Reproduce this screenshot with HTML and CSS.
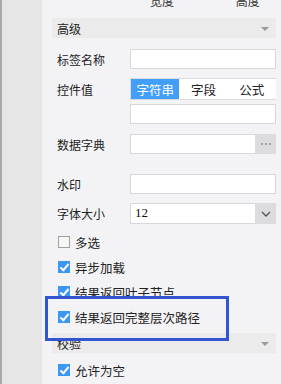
FILE: index.html
```html
<!DOCTYPE html>
<html lang="zh-CN">
<head>
    <meta charset="UTF-8">
    <title>控件属性</title>
    <link rel="stylesheet" href="styles.css">
</head>
<body>
    <div class="app">
        <div class="rail"></div>
        <div class="panel">
            <div class="size-head">
                <span class="w">宽度</span>
                <span class="h">高度</span>
            </div>

            <!-- 高级 -->
            <div class="group-bar">
                <span>高级</span>
                <i class="tri"></i>
            </div>

            <div class="row r-name">
                <label>标签名称</label>
                <div class="input"></div>
            </div>

            <div class="row r-value">
                <label>控件值</label>
                <div class="seg">
                    <span class="on">字符串</span>
                    <span>字段</span>
                    <span>公式</span>
                </div>
            </div>

            <div class="row r-value2">
                <label></label>
                <div class="input"></div>
            </div>

            <div class="row r-dict">
                <label>数据字典</label>
                <div class="input with-btn">
                    <div class="field"></div>
                    <div class="btn">
                        <svg width="10" height="2" viewBox="0 0 10 2"><circle cx="1" cy="1" r="0.9" fill="#888"/><circle cx="5" cy="1" r="0.9" fill="#888"/><circle cx="9" cy="1" r="0.9" fill="#888"/></svg>
                    </div>
                </div>
            </div>

            <div class="row r-mark">
                <label>水印</label>
                <div class="input"></div>
            </div>

            <div class="row r-font">
                <label>字体大小</label>
                <div class="input with-btn">
                    <div class="field num">12</div>
                    <div class="btn">
                        <svg width="10" height="6" viewBox="0 0 10 6"><path d="M1 1 L5 5 L9 1" fill="none" stroke="#555" stroke-width="1.3"/></svg>
                    </div>
                </div>
            </div>

            <div class="check c-multi"><i class="box"></i>多选</div>
            <div class="check"><i class="box on"></i>异步加载</div>
            <div class="check"><i class="box on"></i>结果返回叶子节点</div>
            <div class="check"><i class="box on"></i>结果返回完整层次路径</div>

            <!-- 校验 -->
            <div class="group-bar g-check">
                <span>校验</span>
                <i class="tri"></i>
            </div>

            <div class="check c-empty"><i class="box on"></i>允许为空</div>

            <div class="highlight"></div>
        </div>
    </div>
</body>
</html>
```

FILE: styles.css
```css
body {
    margin: 0;
    font-family: "Noto Sans CJK SC", "Noto Sans", sans-serif;
    font-size: 12px;
    color: #222;
    overflow: hidden;
}

.app {
    display: flex;
    height: 384px;
}

.rail {
    width: 40px;
    background: #e6e6e6;
    border-left: 2px solid #a9a9a9;
}

.panel {
    position: relative;
    flex: 1;
    background: #f3f3f5;
    padding: 0 5px 0 10px;
}

/* 宽度 / 高度 (cut off at the top) */
.size-head {
    height: 14px;
    margin-top: -6px;
    line-height: 14px;
    color: #333;
}
.size-head .w { margin-left: 98px; }
.size-head .h { margin-left: 59px; }

.group-bar {
    display: flex;
    align-items: center;
    justify-content: space-between;
    height: 20px;
    margin-top: 10px;
    padding: 0 5px;
    background: #ebebeb;
}
.tri {
    width: 0;
    height: 0;
    border-left: 4px solid transparent;
    border-right: 4px solid transparent;
    border-top: 4px solid #9a9a9a;
    margin-right: 2px;
    margin-top: 2px;
}

.row {
    display: grid;
    grid-template-columns: 78px 1fr;
    align-items: center;
    height: 20px;
}
.row label {
    padding-left: 5px;
}
.r-name { margin-top: 11px; }
.r-value { margin-top: 9px; height: 22px; }
.r-value2 { margin-top: 4px; }
.r-dict { margin-top: 10px; }
.r-mark { margin-top: 20px; }
.r-font { margin-top: 9px; height: 21px; }

.input {
    height: 100%;
    box-sizing: border-box;
    background: #fff;
    border: 1px solid #d8d8dc;
}
.input.with-btn {
    display: flex;
    border-right: none;
}
.field {
    flex: 1;
}
.field.num {
    font-family: "Liberation Serif", serif;
    font-size: 13px;
    line-height: 18px;
    padding-left: 4px;
    color: #111;
}
.btn {
    flex: 0 0 21px;
    margin: -1px 0;
    background: #dcdcdf;
    display: flex;
    align-items: center;
    justify-content: center;
}

.seg {
    display: flex;
    height: 100%;
    box-sizing: border-box;
    background: #fff;
    border: 1px solid #dcdcdf;
    border-right: none;
}
.seg span {
    flex: 1;
    display: flex;
    align-items: center;
    justify-content: center;
    font-size: 12.5px;
}
.seg .on {
    background: #429efb;
    color: #fff;
}

.check {
    display: flex;
    align-items: center;
    height: 14px;
    margin-top: 11px;
    padding-left: 6px;
    font-size: 12.5px;
}
.c-multi { margin-top: 11px; }
.box {
    width: 12px;
    height: 12px;
    box-sizing: border-box;
    margin-right: 5px;
    border: 1px solid #a0a0a0;
    background: #f7f7f7;
    position: relative;
}
.box.on {
    background: #3c97f2;
    border-color: #3c97f2;
}
.box.on::after {
    content: "";
    position: absolute;
    left: 3px;
    top: 0px;
    width: 3px;
    height: 7px;
    border-right: 2px solid #fff;
    border-bottom: 2px solid #fff;
    transform: rotate(40deg);
}

.g-check { margin-top: 9px; }
.c-empty { margin-top: 10px; }

/* annotation box over the panel */
.highlight {
    position: absolute;
    left: 3px;
    top: 296px;
    width: 178px;
    height: 39px;
    border: 3px solid #3455d1;
}
```
